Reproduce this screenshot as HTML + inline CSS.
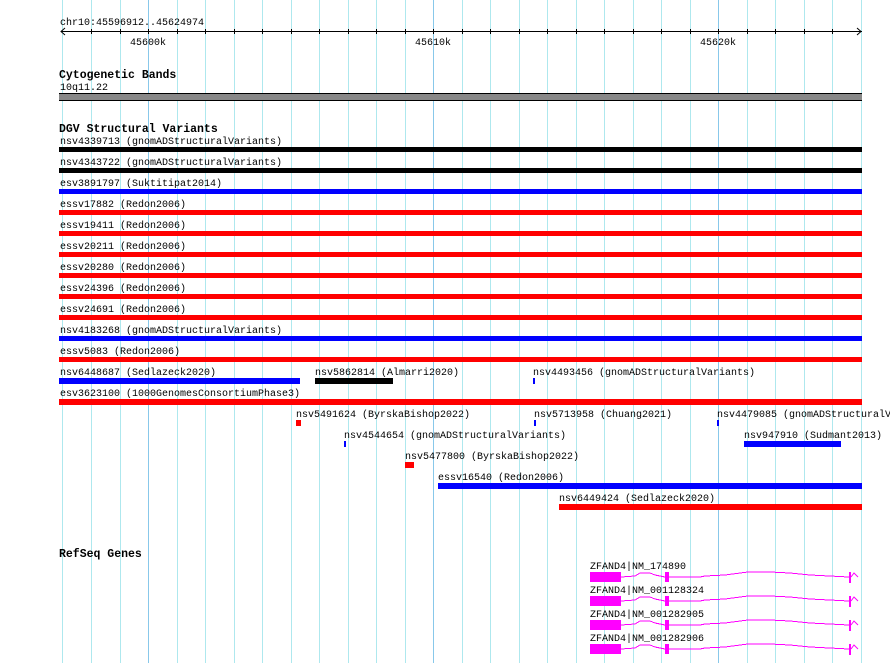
<!DOCTYPE html>
<html><head><meta charset="utf-8"><style>
html,body{margin:0;padding:0;background:#fff;width:890px;height:663px;overflow:hidden}
svg text{font-family:"Liberation Mono",monospace;font-size:10px;fill:#000}
svg text.b{font-weight:bold;font-size:11.5px}
</style></head><body>
<svg width="890" height="663" viewBox="0 0 890 663" xmlns="http://www.w3.org/2000/svg" shape-rendering="crispEdges">
<g stroke="#aee8ee" stroke-width="1">
<line x1="62.5" y1="0" x2="62.5" y2="663"/><line x1="91.5" y1="0" x2="91.5" y2="663"/><line x1="120.5" y1="0" x2="120.5" y2="663"/>
<line x1="177.5" y1="0" x2="177.5" y2="663"/><line x1="205.5" y1="0" x2="205.5" y2="663"/><line x1="234.5" y1="0" x2="234.5" y2="663"/>
<line x1="262.5" y1="0" x2="262.5" y2="663"/><line x1="291.5" y1="0" x2="291.5" y2="663"/><line x1="319.5" y1="0" x2="319.5" y2="663"/>
<line x1="348.5" y1="0" x2="348.5" y2="663"/><line x1="376.5" y1="0" x2="376.5" y2="663"/><line x1="405.5" y1="0" x2="405.5" y2="663"/>
<line x1="462.5" y1="0" x2="462.5" y2="663"/><line x1="490.5" y1="0" x2="490.5" y2="663"/><line x1="519.5" y1="0" x2="519.5" y2="663"/>
<line x1="547.5" y1="0" x2="547.5" y2="663"/><line x1="576.5" y1="0" x2="576.5" y2="663"/><line x1="604.5" y1="0" x2="604.5" y2="663"/>
<line x1="633.5" y1="0" x2="633.5" y2="663"/><line x1="661.5" y1="0" x2="661.5" y2="663"/><line x1="690.5" y1="0" x2="690.5" y2="663"/>
<line x1="747.5" y1="0" x2="747.5" y2="663"/><line x1="775.5" y1="0" x2="775.5" y2="663"/><line x1="804.5" y1="0" x2="804.5" y2="663"/>
<line x1="832.5" y1="0" x2="832.5" y2="663"/><line x1="861.5" y1="0" x2="861.5" y2="663"/>
</g>
<g stroke="#88c8ea" stroke-width="1">
<line x1="148.5" y1="0" x2="148.5" y2="663"/><line x1="433.5" y1="0" x2="433.5" y2="663"/><line x1="718.5" y1="0" x2="718.5" y2="663"/>
</g>
<text x="60" y="25">chr10:45596912..45624974</text>
<g stroke="#000" stroke-width="1">
<line x1="61" y1="31.5" x2="862" y2="31.5"/>
<polyline points="65,28 61,31.5 65,35" fill="none" shape-rendering="auto"/>
<polyline points="857,28 861,31.5 857,35" fill="none" shape-rendering="auto"/>
</g>
<g stroke="#000">
<line x1="91.5" y1="29" x2="91.5" y2="34"/><line x1="120.5" y1="29" x2="120.5" y2="34"/><line x1="148.5" y1="29" x2="148.5" y2="34"/><line x1="177.5" y1="29" x2="177.5" y2="34"/><line x1="205.5" y1="29" x2="205.5" y2="34"/><line x1="234.5" y1="29" x2="234.5" y2="34"/><line x1="262.5" y1="29" x2="262.5" y2="34"/><line x1="291.5" y1="29" x2="291.5" y2="34"/><line x1="319.5" y1="29" x2="319.5" y2="34"/><line x1="348.5" y1="29" x2="348.5" y2="34"/><line x1="376.5" y1="29" x2="376.5" y2="34"/><line x1="405.5" y1="29" x2="405.5" y2="34"/><line x1="433.5" y1="29" x2="433.5" y2="34"/><line x1="462.5" y1="29" x2="462.5" y2="34"/><line x1="490.5" y1="29" x2="490.5" y2="34"/><line x1="519.5" y1="29" x2="519.5" y2="34"/><line x1="547.5" y1="29" x2="547.5" y2="34"/><line x1="576.5" y1="29" x2="576.5" y2="34"/><line x1="604.5" y1="29" x2="604.5" y2="34"/><line x1="633.5" y1="29" x2="633.5" y2="34"/><line x1="661.5" y1="29" x2="661.5" y2="34"/><line x1="690.5" y1="29" x2="690.5" y2="34"/><line x1="718.5" y1="29" x2="718.5" y2="34"/><line x1="747.5" y1="29" x2="747.5" y2="34"/><line x1="775.5" y1="29" x2="775.5" y2="34"/><line x1="804.5" y1="29" x2="804.5" y2="34"/><line x1="832.5" y1="29" x2="832.5" y2="34"/>
</g>
<text x="130" y="45">45600k</text>
<text x="415" y="45">45610k</text>
<text x="700" y="45">45620k</text>
<text class="b" x="59" y="78">Cytogenetic Bands</text>
<text x="60" y="90">10q11.22</text>
<rect x="59" y="93" width="803" height="8" fill="#000"/>
<rect x="59" y="94" width="803" height="6" fill="#888"/>
<text class="b" x="59" y="132">DGV Structural Variants</text>
<text x="60" y="144">nsv4339713 (gnomADStructuralVariants)</text><rect x="59" y="147" width="803" height="5" fill="#000"/>
<text x="60" y="165">nsv4343722 (gnomADStructuralVariants)</text><rect x="59" y="168" width="803" height="5" fill="#000"/>
<text x="60" y="186">esv3891797 (Suktitipat2014)</text><rect x="59" y="189" width="803" height="5" fill="#00f"/>
<text x="60" y="207">essv17882 (Redon2006)</text><rect x="59" y="210" width="803" height="5" fill="#f00"/>
<text x="60" y="228">essv19411 (Redon2006)</text><rect x="59" y="231" width="803" height="5" fill="#f00"/>
<text x="60" y="249">essv20211 (Redon2006)</text><rect x="59" y="252" width="803" height="5" fill="#f00"/>
<text x="60" y="270">essv20280 (Redon2006)</text><rect x="59" y="273" width="803" height="5" fill="#f00"/>
<text x="60" y="291">essv24396 (Redon2006)</text><rect x="59" y="294" width="803" height="5" fill="#f00"/>
<text x="60" y="312">essv24691 (Redon2006)</text><rect x="59" y="315" width="803" height="5" fill="#f00"/>
<text x="60" y="333">nsv4183268 (gnomADStructuralVariants)</text><rect x="59" y="336" width="803" height="5" fill="#00f"/>
<text x="60" y="354">essv5083 (Redon2006)</text><rect x="59" y="357" width="803" height="5" fill="#f00"/>
<text x="60" y="375">nsv6448687 (Sedlazeck2020)</text><rect x="59" y="378" width="241" height="6" fill="#00f"/>
<text x="315" y="375">nsv5862814 (Almarri2020)</text><rect x="315" y="378" width="78" height="6" fill="#000"/>
<text x="533" y="375">nsv4493456 (gnomADStructuralVariants)</text><rect x="533" y="378" width="2" height="6" fill="#00f"/>
<text x="60" y="396">esv3623100 (1000GenomesConsortiumPhase3)</text><rect x="59" y="399" width="803" height="6" fill="#f00"/>
<text x="296" y="417">nsv5491624 (ByrskaBishop2022)</text><rect x="296" y="420" width="5" height="6" fill="#f00"/>
<text x="534" y="417">nsv5713958 (Chuang2021)</text><rect x="534" y="420" width="2" height="6" fill="#00f"/>
<text x="717" y="417">nsv4479085 (gnomADStructuralVariants)</text><rect x="717" y="420" width="2" height="6" fill="#00f"/>
<text x="344" y="438">nsv4544654 (gnomADStructuralVariants)</text><rect x="344" y="441" width="2" height="6" fill="#00f"/>
<text x="744" y="438">nsv947910 (Sudmant2013)</text><rect x="744" y="441" width="97" height="6" fill="#00f"/>
<text x="405" y="459">nsv5477800 (ByrskaBishop2022)</text><rect x="405" y="462" width="9" height="6" fill="#f00"/>
<text x="438" y="480">essv16540 (Redon2006)</text><rect x="438" y="483" width="424" height="6" fill="#00f"/>
<text x="559" y="501">nsv6449424 (Sedlazeck2020)</text><rect x="559" y="504" width="303" height="6" fill="#f00"/>
<text class="b" x="59" y="557">RefSeq Genes</text>
<defs>
<g id="g1">
<rect x="590" y="572" width="31" height="10" fill="#f0f"/>
<rect x="665" y="572" width="4" height="10" fill="#f0f"/>
<polyline points="621,577 635,576 640,573 650,573 655,575 665,577" fill="none" stroke="#f0f"/>
<polyline points="669,577 700,577 705,576 725,575 748,572 770,572 790,573 810,575 849,577" fill="none" stroke="#f0f"/>
<rect x="849" y="572" width="2" height="11" fill="#f0f"/>
<polyline points="851,577 854,573 858,577" fill="none" stroke="#f0f" shape-rendering="auto"/>
</g>
</defs>
<use href="#g1"/>
<use href="#g1" y="24"/>
<use href="#g1" y="48"/>
<use href="#g1" y="72"/>
<text x="590" y="569">ZFAND4|NM_174890</text>
<text x="590" y="593">ZFAND4|NM_001128324</text>
<text x="590" y="617">ZFAND4|NM_001282905</text>
<text x="590" y="641">ZFAND4|NM_001282906</text>
</svg>
</body></html>
